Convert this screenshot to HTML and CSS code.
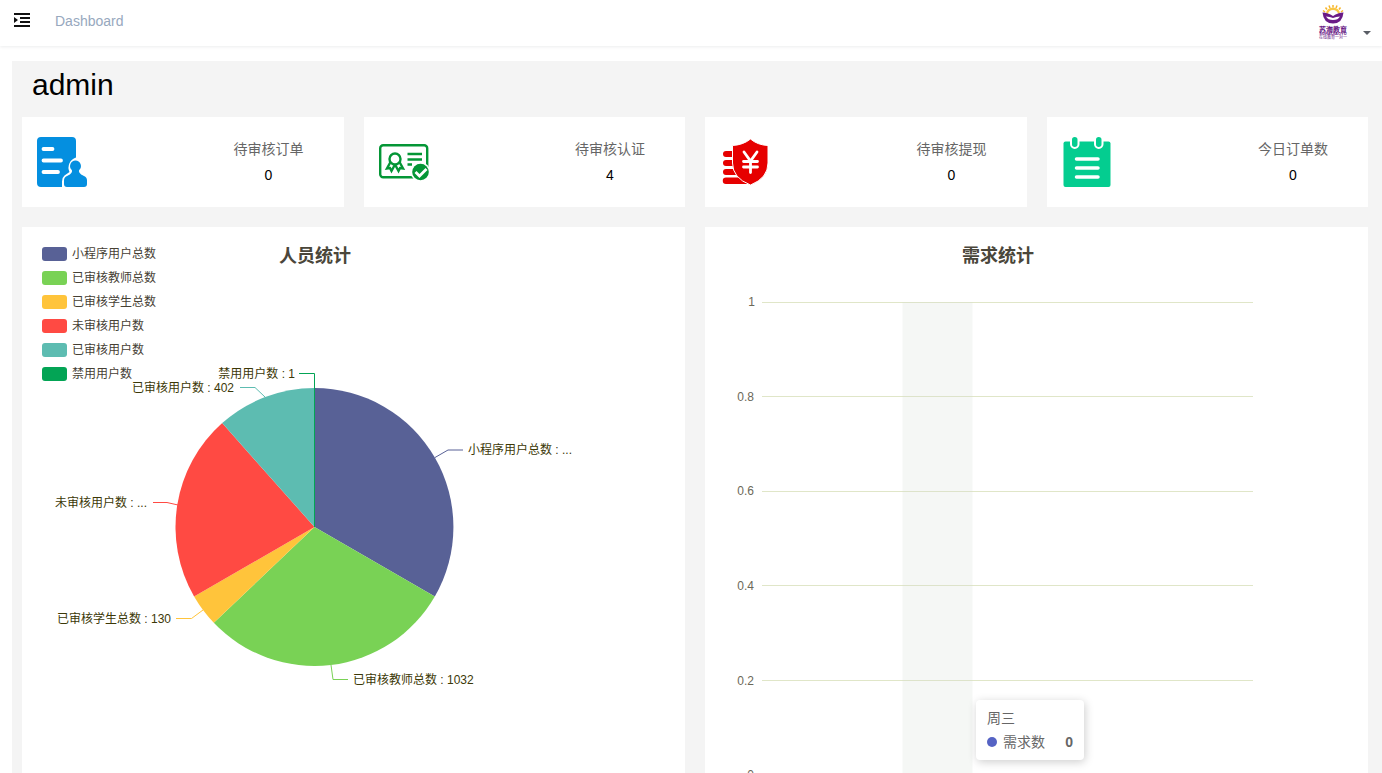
FILE: index.html
```html
<!DOCTYPE html>
<html lang="zh-CN">
<head>
<meta charset="utf-8">
<meta name="viewport" content="width=device-width, initial-scale=1">
<title>Dashboard</title>
<link rel="stylesheet" href="styles.css">
</head>
<body>
<header class="navbar">
  <button class="toggle" type="button" aria-label="Toggle sidebar">
    <svg width="16" height="14" viewBox="0 0 16 14"><path d="M0 0h16v2H0zM6 4h10v2H6zM6 8h10v2H6zM0 12h16v2H0zM0 4l4 3-4 3z" fill="#111"/></svg>
  </button>
  <a class="crumb" href="#">Dashboard</a>
  <button class="account" type="button" aria-label="Account menu">
    <svg class="logo" width="30" height="36" viewBox="0 0 30 36">
      <g stroke="#f6b52c" stroke-width="1.500"><path d="M7 8L5 6.500M9 5.500L7.500 3.500M12 4l-1-2.500M15 3.500V1M18 4l1-2.500M21 5.500l1.500-2M23 8l2-1.500"/></g>
      <path d="M8 9.500a7 6 0 0 1 14 0l-2 .500a5 4 0 0 0-10 0z" fill="#f9c746"/>
      <path d="M4.500 8.500q5.500 0 10.500 3.500 5-3.500 10.500-3.500-1 11-10.500 11T4.500 8.500zm3.500 4q2 3.500 7 3.500t7-3.500q-4 0-7 1.500-3-1.500-7-1.500z" fill="#6a1b86" fill-rule="evenodd"/>
      <text class="logo-name" x="15" y="28" text-anchor="middle">苏海教育</text>
      <text class="logo-latin" x="15" y="31" text-anchor="middle">SUHAIJIAOYU</text>
      <text class="logo-tag" x="15" y="35" text-anchor="middle">在线教育一对一</text>
    </svg>
    <svg class="caret" width="8" height="4" viewBox="0 0 8 4"><path d="M0 0h8L4 4z" fill="#5a5e66"/></svg>
  </button>
</header>

<main class="page">
  <h1 class="user">admin</h1>

  <section class="cards">
    <article class="card">
      <svg class="card-icon" viewBox="0 0 50 50">
        <path d="M4 0h31q4 0 4 4v16.500a10.500 10.500 0 0 0-6.500 14.500l-5 3.500q-2.500 2-2.500 6v5.500H4q-4 0-4-4V4q0-4 4-4z" fill="#048fe0"/>
        <path d="M6.500 12h9M6.500 23.500h17.500M6.500 35h14.500" stroke="#fff" stroke-width="3.800" stroke-linecap="round"/>
        <path d="M38.500 23.500a5.500 5.500 0 0 1 3.700 9.500q-.7 1.200.3 2.700 1 1.800 4.500 3.300 3 1.300 3 4.500v3.500q0 3-3 3H30q-3 0-3-3v-3.500q0-3.200 3-4.500 3.500-1.500 4.500-3.300 1-1.500.3-2.700a5.500 5.500 0 0 1 3.700-9.500z" fill="#048fe0"/>
      </svg>
      <div class="card-text"><p class="label">待审核订单</p><p class="value">0</p></div>
    </article>
    <article class="card">
      <svg class="card-icon" viewBox="0 0 50 50">
        <g fill="none" stroke="#049636" stroke-width="2.400">
          <rect x="1.200" y="8.200" width="47" height="32" rx="3"/>
          <circle cx="16" cy="22" r="5.500"/>
          <path d="M11.500 25l-3.500 6.500 3-.5 1.500 3 3.500-6.500M20.500 25l3.500 6.500-3-.5-1.500 3-3.500-6.500"/>
          <path d="M28.500 17H43M28.500 22.500H43M28.500 27.500H33"/>
        </g>
        <circle cx="41.500" cy="35" r="9.800" fill="#fff"/>
        <circle cx="41.500" cy="35" r="8.300" fill="#049636"/>
        <path d="M36.500 35l4 4 7-7" fill="none" stroke="#fff" stroke-width="2.800"/>
      </svg>
      <div class="card-text"><p class="label">待审核认证</p><p class="value">4</p></div>
    </article>
    <article class="card">
      <svg class="card-icon" viewBox="0 0 50 50">
        <path d="M6 14h7v6H6a3 3 0 0 1 0-6zM6 23h7v6H6a3 3 0 0 1 0-6zM6 32h10l3 6H6a3 3 0 0 1 0-6zM6 40.500h15q4 5 9 6.500H6a3 3 0 0 1 0-6.500z" fill="#e60000"/>
        <path d="M30.500 2q7 6 17.500 6.500v17.500q0 15-17.500 22Q12.500 41 12.500 26V8.500Q23 8 30.500 2z" fill="#e60000" stroke="#fff" stroke-width="1"/>
        <path d="M24 15l6.500 9 6.500-9M30.500 24v11.500M23.500 24.500h14M23.500 30h14" fill="none" stroke="#fff" stroke-width="2.800" stroke-linecap="round"/>
      </svg>
      <div class="card-text"><p class="label">待审核提现</p><p class="value">0</p></div>
    </article>
    <article class="card">
      <svg class="card-icon" viewBox="0 0 50 50">
        <rect x="1.500" y="4.500" width="47" height="45.500" rx="2" fill="#04cd90"/>
        <g fill="#04cd90" stroke="#fff" stroke-width="2"><rect x="9" y="-1" width="7.500" height="12" rx="3.700"/><rect x="33" y="-1" width="7.500" height="12" rx="3.700"/></g>
        <path d="M14.500 22h21.500M14.500 31h21.500M14.500 40h21.500" stroke="#fff" stroke-width="3.500" stroke-linecap="round"/>
      </svg>
      <div class="card-text"><p class="label">今日订单数</p><p class="value">0</p></div>
    </article>
  </section>

  <section class="panels">
    <article class="panel">
      <svg class="chart" width="585" height="600" viewBox="0 0 585 600" role="img" aria-label="人员统计">
        <text class="chart-title" x="293" y="35" text-anchor="middle">人员统计</text>
        <g>
          <rect x="20" y="20" width="25" height="14" rx="3" fill="#586196"/>
          <rect x="20" y="44" width="25" height="14" rx="3" fill="#79d255"/>
          <rect x="20" y="68" width="25" height="14" rx="3" fill="#ffc43b"/>
          <rect x="20" y="92" width="25" height="14" rx="3" fill="#ff4a43"/>
          <rect x="20" y="116" width="25" height="14" rx="3" fill="#5dbcb1"/>
          <rect x="20" y="140" width="25" height="14" rx="3" fill="#03a455"/>
        </g>
        <g class="legend-text">
          <text x="50" y="31">小程序用户总数</text>
          <text x="50" y="55">已审核教师总数</text>
          <text x="50" y="79">已审核学生总数</text>
          <text x="50" y="103">未审核用户数</text>
          <text x="50" y="127">已审核用户数</text>
          <text x="50" y="151">禁用用户数</text>
        </g>
        <path d="M292.500 300V161A139 139 0 0 1 412.800 369.500z" fill="#586196"/>
        <path d="M292.500 300L412.800 369.500A139 139 0 0 1 191.800 395.800z" fill="#79d255"/>
        <path d="M292.500 300L191.800 395.800A139 139 0 0 1 172.100 369.500z" fill="#ffc43b"/>
        <path d="M292.500 300L172.100 369.500A139 139 0 0 1 200.200 196.100z" fill="#ff4a43"/>
        <path d="M292.500 300L200.200 196.100A139 139 0 0 1 292.500 161z" fill="#5dbcb1"/>
        <g fill="none">
          <path d="M292.500 300V146.500H277" stroke="#03a455"/>
          <path d="M413 230.500L426 223H441" stroke="#586196"/>
          <path d="M309 438L311 452.500H326" stroke="#79d255"/>
          <path d="M181 383L169.500 391.500H154" stroke="#ffc43b"/>
          <path d="M156 278L145 275.500H131" stroke="#ff4a43"/>
          <path d="M243 170L233 160.500H218" stroke="#5dbcb1"/>
        </g>
        <g class="pie-label">
          <text x="446" y="227">小程序用户总数 : ...</text>
          <text x="331" y="457">已审核教师总数 : 1032</text>
          <text x="149" y="396" text-anchor="end">已审核学生总数 : 130</text>
          <text x="125" y="280" text-anchor="end">未审核用户数 : ...</text>
          <text x="212" y="165" text-anchor="end">已审核用户数 : 402</text>
          <text x="273" y="151" text-anchor="end">禁用用户数 : 1</text>
        </g>
      </svg>
    </article>

    <article class="panel">
      <svg class="chart" width="585" height="600" viewBox="0 0 585 600" role="img" aria-label="需求统计">
        <text class="chart-title" x="293" y="35" text-anchor="middle">需求统计</text>
        <path d="M57 75.500H548M57 169.500H548M57 264.500H548M57 358.500H548M57 453.500H548M57 548.500H548" stroke="#e0e6c8"/>
        <rect x="197.500" y="75" width="70" height="473" fill="#d2dbd0" fill-opacity=".22"/>
        <g class="axis-label" text-anchor="end">
          <text x="50" y="79">1</text>
          <text x="49" y="174">0.8</text>
          <text x="49" y="268">0.6</text>
          <text x="49" y="363">0.4</text>
          <text x="49" y="458">0.2</text>
          <text x="49" y="552">0</text>
        </g>
      </svg>
      <div class="tooltip">
        <p class="tooltip-title">周三</p>
        <p class="tooltip-row"><span class="dot"></span><span>需求数</span><b>0</b></p>
      </div>
    </article>
  </section>
</main>
</body>
</html>
```
FILE: styles.css
```css
* { box-sizing: border-box; }
html { scrollbar-width: none; }
body {
  margin: 0;
  background: #fff;
  color: #000;
  font-family: "Liberation Sans", "Noto Sans CJK SC", sans-serif;
  font-size: 14px;
}
h1, p { margin: 0; }
button { border: 0; padding: 0; background: none; cursor: pointer; }
svg { display: block; }

.navbar {
  display: flex;
  align-items: center;
  height: 46px;
  padding: 0 11px 0 14px;
  box-shadow: 0 1px 3px rgba(0, 21, 41, .08);
}
.toggle { margin-bottom: 6px; }
.crumb {
  margin: 0 auto 4px 25px;
  color: #97a8be;
  text-decoration: none;
}
.account { display: flex; align-items: flex-end; gap: 15px; }
.logo { margin-bottom: 3px; }
.caret { margin-bottom: 8px; }
.logo-name { font-size: 7px; font-weight: 900; fill: #6a1b86; }
.logo-latin { font-size: 4px; font-weight: 700; fill: #6a1b86; }
.logo-tag { font-size: 4px; fill: #6a1b86; }

.page {
  margin: 15px 0 0 12px;
  padding: 0 14px 20px 10px;
  background: #f4f4f4;
}
.user {
  padding: 7px 10px 15px;
  font-size: 30px;
  font-weight: 400;
  line-height: 34px;
}
.cards { display: grid; grid-template-columns: repeat(4, 1fr); gap: 20px; }
.card {
  display: flex;
  align-items: center;
  justify-content: space-between;
  height: 90px;
  padding: 0 15px;
  background: #fff;
}
.card-icon { width: 50px; height: 50px; overflow: visible; }
.card-text { width: 120px; text-align: center; line-height: 26px; }
.label { color: #666; }

.panels {
  display: grid;
  grid-template-columns: repeat(2, 1fr);
  gap: 20px;
  margin-top: 20px;
}
.panel { position: relative; background: #fff; }
.chart-title { font-size: 18px; font-weight: 700; fill: #4a463a; }
.legend-text, .pie-label, .axis-label { font-size: 12px; }
.legend-text { fill: #464034; }
.pie-label { fill: #3c3807; }
.axis-label { fill: #6b6858; }

.tooltip {
  position: absolute;
  left: 271px;
  top: 473px;
  width: 108px;
  padding: 6px 11px;
  border-radius: 4px;
  background: #fff;
  box-shadow: 1px 2px 10px rgba(0, 0, 0, .2);
  color: #666;
  line-height: 24px;
}
.tooltip-row { display: flex; align-items: center; gap: 6px; }
.tooltip-row b { margin-left: auto; }
.dot { width: 10px; height: 10px; border-radius: 50%; background: #5563c4; }
```
